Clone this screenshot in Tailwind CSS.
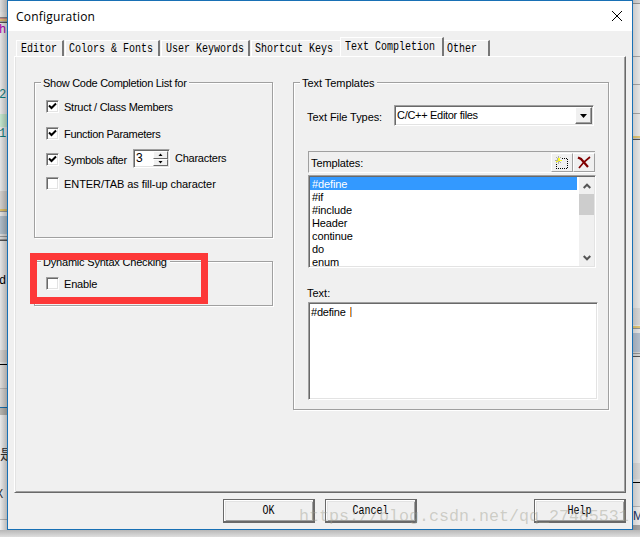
<!DOCTYPE html>
<html lang="en">
<head>
<meta charset="utf-8">
<title>Configuration</title>
<script src="https://cdn.jsdelivr.net/npm/@tailwindcss/browser@4"></script>
</head>
<body class="w-[640px] h-[537px] overflow-hidden bg-[#e6e6e6] font-['Liberation_Sans',sans-serif] text-[11px] leading-[13px] tracking-[-0.2px] text-black">
<div class="relative flex flex-col w-[640px] h-[537px]">
<div class="flex h-[530px]">
  <!-- editor window behind, left edge -->
  <div class="relative w-[7px] h-[530px] overflow-hidden flex flex-col font-['Liberation_Mono',monospace] text-[12px]">
    <div class="h-[12px] bg-[#e2e2e2]"></div><div class="h-[5px] bg-[#e8e6e4]"></div><div class="h-px bg-[#888]"></div><div class="h-px bg-[#d08c84]"></div><div class="h-px bg-[#e8c080]"></div><div class="h-px bg-[#e0c070]"></div><div class="h-px bg-[#aaa]"></div><div class="h-px bg-[#555]"></div>
    <div class="h-[91px] bg-[#ececec]"></div><div class="h-[13px] bg-[#c8ecd2]"></div><div class="h-[64px] bg-[#ececec]"></div>
    <div class="h-[18px] bg-[#d8d5d2]"></div><div class="h-[2px] bg-[#e4c468]"></div><div class="h-px bg-[#999]"></div><div class="h-[4px] bg-[#e8e8e8]"></div>
    <div class="h-[18px] bg-[#b4c2ce]"></div><div class="h-[2px] bg-[#e0e0e0]"></div><div class="h-px bg-[#999]"></div><div class="h-[2px] bg-[#ddd]"></div><div class="h-px bg-[#999]"></div><div class="h-px bg-[#555]"></div>
    <div class="h-[109px] bg-[#ececec]"></div><div class="h-[12px] bg-[#d8d6d4]"></div><div class="h-[2px] bg-[#e4e4e4]"></div><div class="h-px bg-black"></div><div class="h-[23px] bg-[#e4e2e0]"></div><div class="h-px bg-[#bbb]"></div><div class="h-[18px] bg-[#dcdad8]"></div><div class="h-px bg-[#1870b0]"></div><div class="h-[7px] bg-[#bbb9b4]"></div><div class="h-[104px] bg-[#f0f0f0]"></div><div class="h-px bg-[#bbb]"></div><div class="grow bg-[#f6f6f6]"></div>
    <span class="absolute left-0 top-[24px] text-[#b000b0] -ml-[1px]">h</span>
    <span class="absolute left-0 top-[89px] text-[#108080] -ml-[1px]">2</span>
    <span class="absolute left-0 top-[128px] text-[#108080] -ml-[1px]">1</span>
    <span class="absolute left-0 top-[275px] -ml-[1px]">d</span>
    <span class="absolute left-0 top-[446px] text-[14px] leading-[14px] font-['Noto_Sans_CJK_SC',sans-serif] text-[#333]">是</span>
    <span class="absolute -left-[4px] top-[489px] text-[#333]">X</span>
    <div class="absolute inset-0 bg-linear-to-r from-black/3 to-black/25"></div>
  </div>

  <!-- dialog -->
  <div class="w-[626px] h-[530px] border border-[#1870b5] bg-[#f0f0f0] flex flex-col">
    <div class="h-[30px] bg-white flex justify-between items-center pl-2 pr-[10px]">
      <span class="font-['Open_Sans',sans-serif] text-[12px] tracking-[0.2px]">Configuration</span>
      <svg class="w-[10px] h-[10px] mt-[-1px]" viewBox="0 0 10 10" stroke="#000" fill="none"><path d="M0 0L10 10M10 0L0 10"/></svg>
    </div>

    <div class="h-[25px] flex items-end pl-2 font-['Liberation_Mono',monospace] text-[10px] tracking-normal whitespace-pre">
      <div class="w-[48px] h-[16px] border-l border-t border-white border-r-2 border-r-[#777] pl-[4px] pt-px"><span class="inline-block scale-y-120">Editor</span></div>
      <div class="w-[95px] h-[16px] border-l border-t border-white border-r-2 border-r-[#777] ml-px pl-[3px] pt-px"><span class="inline-block scale-y-120">Colors &amp; Fonts</span></div>
      <div class="w-[89px] h-[16px] border-l border-t border-white border-r-2 border-r-[#777] ml-px pl-[4px] pt-px"><span class="inline-block scale-y-120">User Keywords</span></div>
      <div class="w-[89px] h-[16px] border-l border-t border-white ml-px pl-[3px] pt-px"><span class="inline-block scale-y-120">Shortcut Keys</span></div>
      <div class="w-[104px] h-[19px] border-l border-t border-white border-r-2 border-r-[#777] pl-[4px] pt-[2px]"><span class="inline-block scale-y-120">Text Completion</span></div>
      <div class="w-[46px] h-[16px] border-t border-white border-r-2 border-r-[#777] pl-[3px] pt-px"><span class="inline-block scale-y-120">Other</span></div>
    </div>

    <!-- tab page -->
    <div class="relative ml-[6px] w-[612px] h-[437px] border border-white border-r-[#696969] border-b-[#696969] shadow-[inset_1px_0_0_#e3e3e3,inset_-1px_-1px_0_#a0a0a0] pl-[19px] pt-[25px] flex gap-[20px]">
      <div class="w-[239px] flex flex-col gap-[23px]">
        <div class="h-[156px] border border-[#a0a0a0] shadow-[inset_1px_1px_0_#fff,1px_1px_0_#fff] flex flex-col pl-[11px]">
          <div class="-mt-[6px] -ml-[5px] px-[2px] bg-[#f0f0f0] self-start h-[13px] w-[148px] tracking-[-0.28px] whitespace-nowrap">Show Code Completion List for</div>
          <div class="flex items-center h-[13px] mt-[10px] gap-[5px]">
            <i class="size-[13px] bg-white border border-[#a0a0a0] border-r-white border-b-white shadow-[inset_1px_1px_0_#696969,inset_-1px_-1px_0_#e3e3e3]"><svg class="size-[11px]" viewBox="0 0 11 11" fill="none" stroke="#000" stroke-width="2"><path d="M2 4.5L4.5 7L9 2.5"/></svg></i>
            <span class="mt-px tracking-[-0.25px]">Struct / Class Members</span></div>
          <div class="flex items-center h-[13px] mt-[14px] gap-[5px]">
            <i class="size-[13px] bg-white border border-[#a0a0a0] border-r-white border-b-white shadow-[inset_1px_1px_0_#696969,inset_-1px_-1px_0_#e3e3e3]"><svg class="size-[11px]" viewBox="0 0 11 11" fill="none" stroke="#000" stroke-width="2"><path d="M2 4.5L4.5 7L9 2.5"/></svg></i>
            <span class="mt-px tracking-[-0.3px]">Function Parameters</span></div>
          <div class="flex items-center h-[19px] mt-[9px]">
            <i class="size-[13px] mt-[2px] bg-white border border-[#a0a0a0] border-r-white border-b-white shadow-[inset_1px_1px_0_#696969,inset_-1px_-1px_0_#e3e3e3]"><svg class="size-[11px]" viewBox="0 0 11 11" fill="none" stroke="#000" stroke-width="2"><path d="M2 4.5L4.5 7L9 2.5"/></svg></i>
            <span class="ml-[5px] w-[69px] mt-[3px] tracking-[-0.35px]">Symbols after</span>
            <div class="w-[37px] h-[19px] bg-white border border-[#a0a0a0] border-r-white border-b-white shadow-[inset_1px_1px_0_#696969,inset_-1px_-1px_0_#e3e3e3] flex justify-between pl-[2px] pr-px py-px">
              <span class="text-[12px] leading-[15px]">3</span>
              <div class="w-[15px] flex flex-col bg-[#f0f0f0]">
                <div class="h-[8px] border border-white border-r-[#696969] border-b-[#696969] flex items-center justify-center"><svg class="w-[5px] h-[3px]" viewBox="0 0 5 3"><path d="M.5 3L2.5 .5L4.5 3z"/></svg></div>
                <div class="h-[8px] border border-white border-r-[#696969] border-b-[#696969] flex items-center justify-center"><svg class="w-[5px] h-[3px]" viewBox="0 0 5 3"><path d="M.5 0L2.5 2.5L4.5 0z"/></svg></div>
              </div>
            </div>
            <span class="ml-[5px] tracking-[-0.25px]">Characters</span></div>
          <div class="flex items-center h-[13px] mt-[9px] gap-[5px]">
            <i class="size-[13px] bg-white border border-[#a0a0a0] border-r-white border-b-white shadow-[inset_1px_1px_0_#696969,inset_-1px_-1px_0_#e3e3e3]"></i>
            <span class="mt-px whitespace-nowrap tracking-[-0.07px]">ENTER/TAB as fill-up character</span></div>
        </div>
        <div class="h-[45px] border border-[#a0a0a0] shadow-[inset_1px_1px_0_#fff,1px_1px_0_#fff] flex flex-col pl-[11px]">
          <div class="-mt-[6px] -ml-[5px] px-[2px] bg-[#f0f0f0] self-start h-[13px] w-[129px] whitespace-nowrap">Dynamic Syntax Checking</div>
          <div class="flex items-center h-[13px] mt-[8px] gap-[5px]">
            <i class="size-[13px] bg-white border border-[#a0a0a0] border-r-white border-b-white shadow-[inset_1px_1px_0_#696969,inset_-1px_-1px_0_#e3e3e3]"></i>
            <span class="mt-px">Enable</span></div>
        </div>
      </div>

      <div class="w-[316px] h-[328px] border border-[#a0a0a0] shadow-[inset_1px_1px_0_#fff,1px_1px_0_#fff] flex flex-col pl-[14px]">
        <div class="-mt-[6px] -ml-[8px] px-[2px] bg-[#f0f0f0] self-start h-[13px] w-[77px] tracking-[-0.05px] whitespace-nowrap">Text Templates</div>
        <div class="flex mt-[15px] h-[21px] -ml-px">
          <span class="w-[87px] mt-[6px] tracking-[-0.07px]">Text File Types:</span>
          <div class="w-[200px] h-[21px] bg-white border border-[#a0a0a0] border-r-white border-b-white shadow-[inset_1px_1px_0_#696969,inset_-1px_-1px_0_#e3e3e3] flex justify-between pl-[2px] p-px">
            <span class="mt-[2px] tracking-[-0.3px]">C/C++ Editor files</span>
            <div class="w-[17px] h-[17px] bg-[#f0f0f0] border border-white border-r-[#696969] border-b-[#696969] shadow-[inset_-1px_-1px_0_#a0a0a0] flex items-center justify-center"><svg class="w-[7px] h-[4px]" viewBox="0 0 7 4"><path d="M0 0H7L3.5 4z"/></svg></div>
          </div>
        </div>
        <div class="mt-[25px] w-[287px] h-[22px] border-t border-l border-[#a0a0a0] border-b border-b-white flex justify-between pl-[2px]">
          <span class="mt-[5px] tracking-[-0.1px]">Templates:</span>
          <div class="flex pt-px">
            <div class="w-[22px] h-[19px] border border-white border-r-[#a0a0a0] border-b-[#a0a0a0] pl-[2px] pt-[2px]"><svg class="w-[15px] h-[14px]" viewBox="0 0 15 14" fill="none" shape-rendering="crispEdges"><path d="M2.5 8V12.5H13.5V2.5H8" stroke="#000" stroke-dasharray="1 1"/><path d="M4.5 0V8M1 4.5H8M2 1L7 7M7 1L2 7" stroke="#b0b0a0"/><path d="M4 2H6V5H4zM2 5H4V6H2zM6 4H8V5H6z" fill="#ffff20"/></svg></div>
            <div class="w-[22px] h-[19px] border border-white border-r-[#a0a0a0] border-b-[#a0a0a0] pl-[3px] pt-[2px]"><svg class="w-[14px] h-[13px]" viewBox="0 0 14 13" fill="none" stroke="#800000"><path d="M1 1.5L4 3L11 11" stroke-width="2.2"/><path d="M13 1L7 6L2 12" stroke-width="1.7"/></svg></div>
          </div>
        </div>
        <div class="mt-[2px] w-[288px] h-[93px] bg-white border border-[#a0a0a0] border-r-white border-b-white shadow-[inset_1px_1px_0_#696969,inset_-1px_-1px_0_#e3e3e3] p-px flex">
          <div class="w-[269px] pr-[2px] h-[89px] overflow-hidden leading-[15px] tracking-[-0.12px]">
            <div class="h-[13px] bg-[#3399ff] text-white pl-[2px]">#define</div>
            <div class="h-[13px] pl-[2px]">#if</div>
            <div class="h-[13px] pl-[2px]">#include</div>
            <div class="h-[13px] pl-[2px]">Header</div>
            <div class="h-[13px] pl-[2px]">continue</div>
            <div class="h-[13px] pl-[2px]">do</div>
            <div class="h-[13px] pl-[2px]">enum</div>
          </div>
          <div class="w-[15px] h-[89px] bg-[#f0f0f0] flex flex-col items-center">
            <div class="h-[17px] pt-[6px]"><svg class="w-[8px] h-[6px]" viewBox="0 0 8 6" fill="none" stroke="#555" stroke-width="2"><path d="M.7 5L4 1.7L7.3 5"/></svg></div>
            <div class="w-[15px] h-[21px] bg-[#cdcdcd]"></div>
            <div class="grow"></div>
            <div class="h-[11px]"><svg class="w-[8px] h-[6px]" viewBox="0 0 8 6" fill="none" stroke="#555" stroke-width="2"><path d="M.7 1L4 4.3L7.3 1"/></svg></div>
          </div>
        </div>
        <div class="mt-[19px] h-[15px] -ml-px tracking-normal">Text:</div>
        <div class="w-[290px] h-[98px] bg-white border border-[#a0a0a0] border-r-white border-b-white shadow-[inset_1px_1px_0_#696969,inset_-1px_-1px_0_#e3e3e3] pl-[2px] pt-[3px] flex items-start">
          <span>#define</span><i class="ml-[4px] mt-px w-[2px] h-[10px] bg-[#f08a20] border-r border-[#8fb4e0]"></i>
        </div>
      </div>

      <!-- highlight -->
      <div class="absolute left-[15px] top-[196px] w-[178px] h-[51px] border-[7px] border-[#fd3838]"></div>
    </div>

    <div class="flex mt-[6px] ml-[215px] font-['Liberation_Mono',monospace] text-[10px] tracking-normal">
      <div class="w-[92px] h-[24px] border border-[#696969] border-r-2 border-b-2 shadow-[inset_1px_1px_0_#fff,inset_2px_2px_0_#e3e3e3,inset_-1px_-1px_0_#a0a0a0] flex items-center justify-center"><span class="scale-y-120">OK</span></div>
      <div class="ml-[10px] w-[92px] h-[24px] border border-[#696969] border-r-2 border-b-2 shadow-[inset_1px_1px_0_#fff,inset_2px_2px_0_#e3e3e3,inset_-1px_-1px_0_#a0a0a0] flex items-center justify-center"><span class="scale-y-120">Cancel</span></div>
      <div class="ml-[117px] w-[92px] h-[24px] border border-[#696969] border-r-2 border-b-2 shadow-[inset_1px_1px_0_#fff,inset_2px_2px_0_#e3e3e3,inset_-1px_-1px_0_#a0a0a0] flex items-center justify-center"><span class="scale-y-120">Help</span></div>
    </div>
  </div>

  <!-- editor window behind, right edge -->
  <div class="relative w-[7px] h-[530px] overflow-hidden flex flex-col">
    <div class="h-[3px] bg-[#ddd]"></div><div class="h-px bg-[#999]"></div><div class="h-[52px] bg-[#efefef]"></div><div class="h-px bg-[#aaa]"></div><div class="h-[27px] bg-[#efefef]"></div><div class="h-px bg-[#aaa]"></div><div class="h-[28px] bg-[#efefef]"></div><div class="h-px bg-[#aaa]"></div><div class="h-[22px] bg-[#efefef]"></div>
    <div class="h-[2px] bg-[#e8cc78]"></div><div class="h-px bg-[#ccc]"></div><div class="h-px bg-[#555]"></div>
    <div class="h-[168px] bg-[#efefef]"></div><div class="h-[17px] bg-[#dedede]"></div><div class="h-px bg-[#eee]"></div><div class="h-[2px] bg-[#e8cc78]"></div><div class="h-px bg-[#999]"></div><div class="h-[4px] bg-[#eee]"></div><div class="h-[19px] bg-[#b9c5d4]"></div><div class="h-px bg-[#ddd]"></div><div class="h-px bg-[#999]"></div><div class="h-[2px] bg-[#ddd]"></div><div class="h-px bg-[#555]"></div>
    <div class="h-[106px] bg-[#efefef]"></div><div class="h-[16px] bg-[#dedede]"></div><div class="h-[3px] bg-[#e8e8e8]"></div><div class="h-px bg-black"></div><div class="h-[23px] bg-[#e9e9e9]"></div><div class="h-px bg-[#bbb]"></div><div class="h-[18px] bg-[#f4f4f4]"></div><div class="grow bg-[#aaa]"></div>
    <span class="absolute left-0 top-[510px] text-[12px] text-[#203060]">M</span>
    <div class="absolute inset-0 bg-linear-to-r from-black/15 to-black/4"></div>
  </div>
</div>
<div class="h-[7px] bg-linear-to-b from-[#b8b8b8] to-[#dedede]"></div>

<!-- watermark -->
<div class="absolute left-[299px] top-[506px] text-[16.67px] leading-[22px] tracking-normal font-['Liberation_Mono',monospace] text-[#a0a090]/45 whitespace-nowrap">https://blog.csdn.net/qq_27485531</div>
</div>
</body>
</html>
